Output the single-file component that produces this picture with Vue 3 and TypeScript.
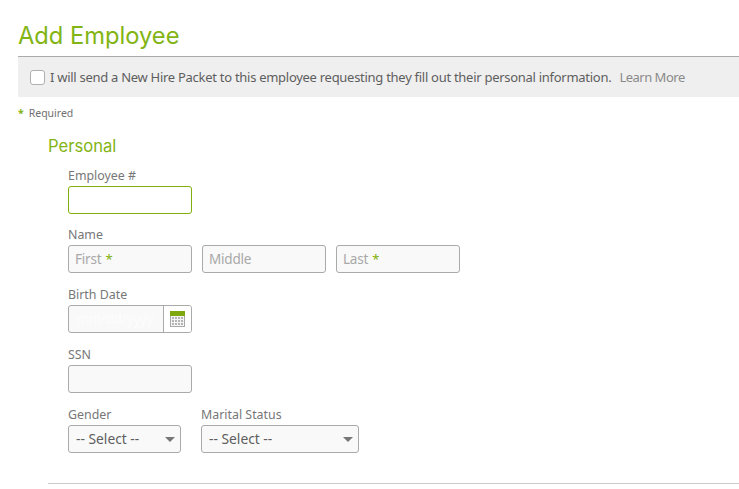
<template>
  <div class="page">
    <h1 class="title">Add Employee</h1>

    <div class="packet">
      <input id="packet" type="checkbox" class="check" />
      <label for="packet" class="packet-text">
        I will send a New Hire Packet to this employee requesting they fill out their personal information.
      </label>
      <a class="learn">Learn More</a>
    </div>

    <div class="required"><span class="star">*</span><span>Required</span></div>

    <section class="section">
      <h2 class="section-title">Personal</h2>

      <div class="fields">
        <div class="field first-field">
          <label class="label">Employee #</label>
          <input type="text" class="input focused" />
        </div>

        <div class="field">
          <label class="label">Name</label>
          <div class="row name-row">
            <div v-for="part in nameParts" :key="part.label" class="input fake">
              {{ part.label }}<span v-if="part.required" class="star inline">*</span>
            </div>
          </div>
        </div>

        <div class="field">
          <label class="label">Birth Date</label>
          <div class="date">
            <span class="date-text">mm/dd/yyyy</span>
            <span class="date-btn">
              <svg width="15" height="16" viewBox="0 0 15 16">
                <rect x="0" y="0" width="15" height="5" fill="#7fa80f" />
                <rect x="0" y="5" width="15" height="11" fill="#a9a9a9" />
                <rect x="1" y="5" width="13" height="10" fill="#f4f4f4" />
                <g fill="#b5b5b5">
                  <template v-for="y in [6, 9, 12]" :key="y">
                    <rect v-for="x in [2, 5, 8, 11]" :key="x" :x="x" :y="y" width="2" height="2" />
                  </template>
                </g>
              </svg>
            </span>
          </div>
        </div>

        <div class="field">
          <label class="label">SSN</label>
          <input type="text" class="input" />
        </div>

        <div class="row select-row">
          <div v-for="sel in selects" :key="sel.label" class="field-inline">
            <label class="label">{{ sel.label }}</label>
            <div class="select" :style="{ width: sel.width + 'px' }">
              <span>-- Select --</span>
              <span class="caret"></span>
            </div>
          </div>
        </div>
      </div>

      <div class="divider"></div>
    </section>
  </div>
</template>

<script setup lang="ts">
const nameParts = [
  { label: "First", required: true },
  { label: "Middle", required: false },
  { label: "Last", required: true },
];

const selects = [
  { label: "Gender", width: 113 },
  { label: "Marital Status", width: 158 },
];
</script>

<style>
html,
body {
  background: #fff;
  overflow: hidden;
}
</style>

<style scoped>
.page {
  width: 739px;
  height: 489px;
  overflow: hidden;
  box-sizing: border-box;
  padding: 21px 0 0 18px;
  font-family: "Noto Sans", "Open Sans", sans-serif;
  color: #666;
}

.title {
  margin: 0;
  font-family: Inter, "Noto Sans", sans-serif;
  font-size: 23.7px;
  line-height: 30px;
  font-weight: 400;
  color: #82b414;
}

.packet {
  display: flex;
  align-items: center;
  box-sizing: border-box;
  height: 41px;
  margin-top: 5px;
  padding-left: 12px;
  background: #efefef;
  border-top: 1px solid #aaa;
  font-size: 13px;
  color: #5e5e5e;
}

.check {
  appearance: none;
  box-sizing: border-box;
  width: 15px;
  height: 15px;
  margin: 0 5px 0 0;
  background: #fff;
  border: 1px solid #afafaf;
  border-radius: 3px;
}

.packet-text {
  white-space: nowrap;
  letter-spacing: -0.28px;
}

.learn {
  margin-left: 8px;
  letter-spacing: -0.5px;
  color: #8a8a8a;
}

.required {
  display: flex;
  align-items: center;
  gap: 5px;
  margin-top: 8px;
  height: 16px;
  font-size: 10.5px;
  color: #707070;
}

.star {
  color: #7fb00e;
  font-weight: 700;
}

.section {
  padding-left: 30px;
}

.section-title {
  margin: 15px 0 0;
  font-family: Inter, "Noto Sans", sans-serif;
  font-size: 16.6px;
  line-height: 20px;
  font-weight: 400;
  color: #82b414;
}

.fields {
  display: flex;
  flex-direction: column;
  gap: 13px;
  padding-left: 20px;
  margin-top: 11px;
}

.first-field {
  margin-bottom: -1px;
}

.field,
.field-inline {
  display: flex;
  flex-direction: column;
  align-items: flex-start;
}

.label {
  display: block;
  height: 19px;
  font-size: 12.4px;
  line-height: 17px;
  color: #777;
}

.input {
  box-sizing: border-box;
  width: 124px;
  height: 28px;
  margin: 0;
  padding: 0 6px;
  background: #f9f9f9;
  border: 1px solid #aaa;
  border-radius: 3px;
  outline: none;
  font-size: 13.5px;
  line-height: 26px;
  letter-spacing: -0.2px;
  color: #a8a8a8;
}

.focused {
  background: #fff;
  border-color: #7fb00e;
}

.row {
  display: flex;
}

.name-row {
  gap: 10px;
}

.inline {
  margin-left: 4px;
  font-size: 13px;
  font-weight: 400;
}

.date {
  display: flex;
  box-sizing: border-box;
  width: 124px;
  height: 28px;
  background: #f9f9f9;
  border: 1px solid #aaa;
  border-radius: 3px;
  overflow: hidden;
}

.date-text {
  flex: 1;
  min-width: 0;
  padding-left: 7px;
  font-size: 13.5px;
  line-height: 26px;
  letter-spacing: -0.2px;
  white-space: nowrap;
  overflow: hidden;
  color: #fdfdfd;
}

.date-btn {
  display: flex;
  align-items: center;
  justify-content: center;
  flex: none;
  box-sizing: border-box;
  width: 28px;
  background: #fff;
  border-left: 1px solid #aaa;
}

.select-row {
  gap: 20px;
}

.select {
  display: flex;
  align-items: center;
  justify-content: space-between;
  box-sizing: border-box;
  height: 28px;
  padding: 0 5px 0 7px;
  background: #f9f9f9;
  border: 1px solid #aaa;
  border-radius: 3px;
  font-size: 13.8px;
  line-height: 24px;
  color: #5e5e5e;
}

.caret {
  width: 0;
  height: 0;
  border-left: 5px solid transparent;
  border-right: 5px solid transparent;
  border-top: 5px solid #777;
}

.divider {
  height: 1px;
  margin-top: 30px;
  background: #ccc;
}
</style>
